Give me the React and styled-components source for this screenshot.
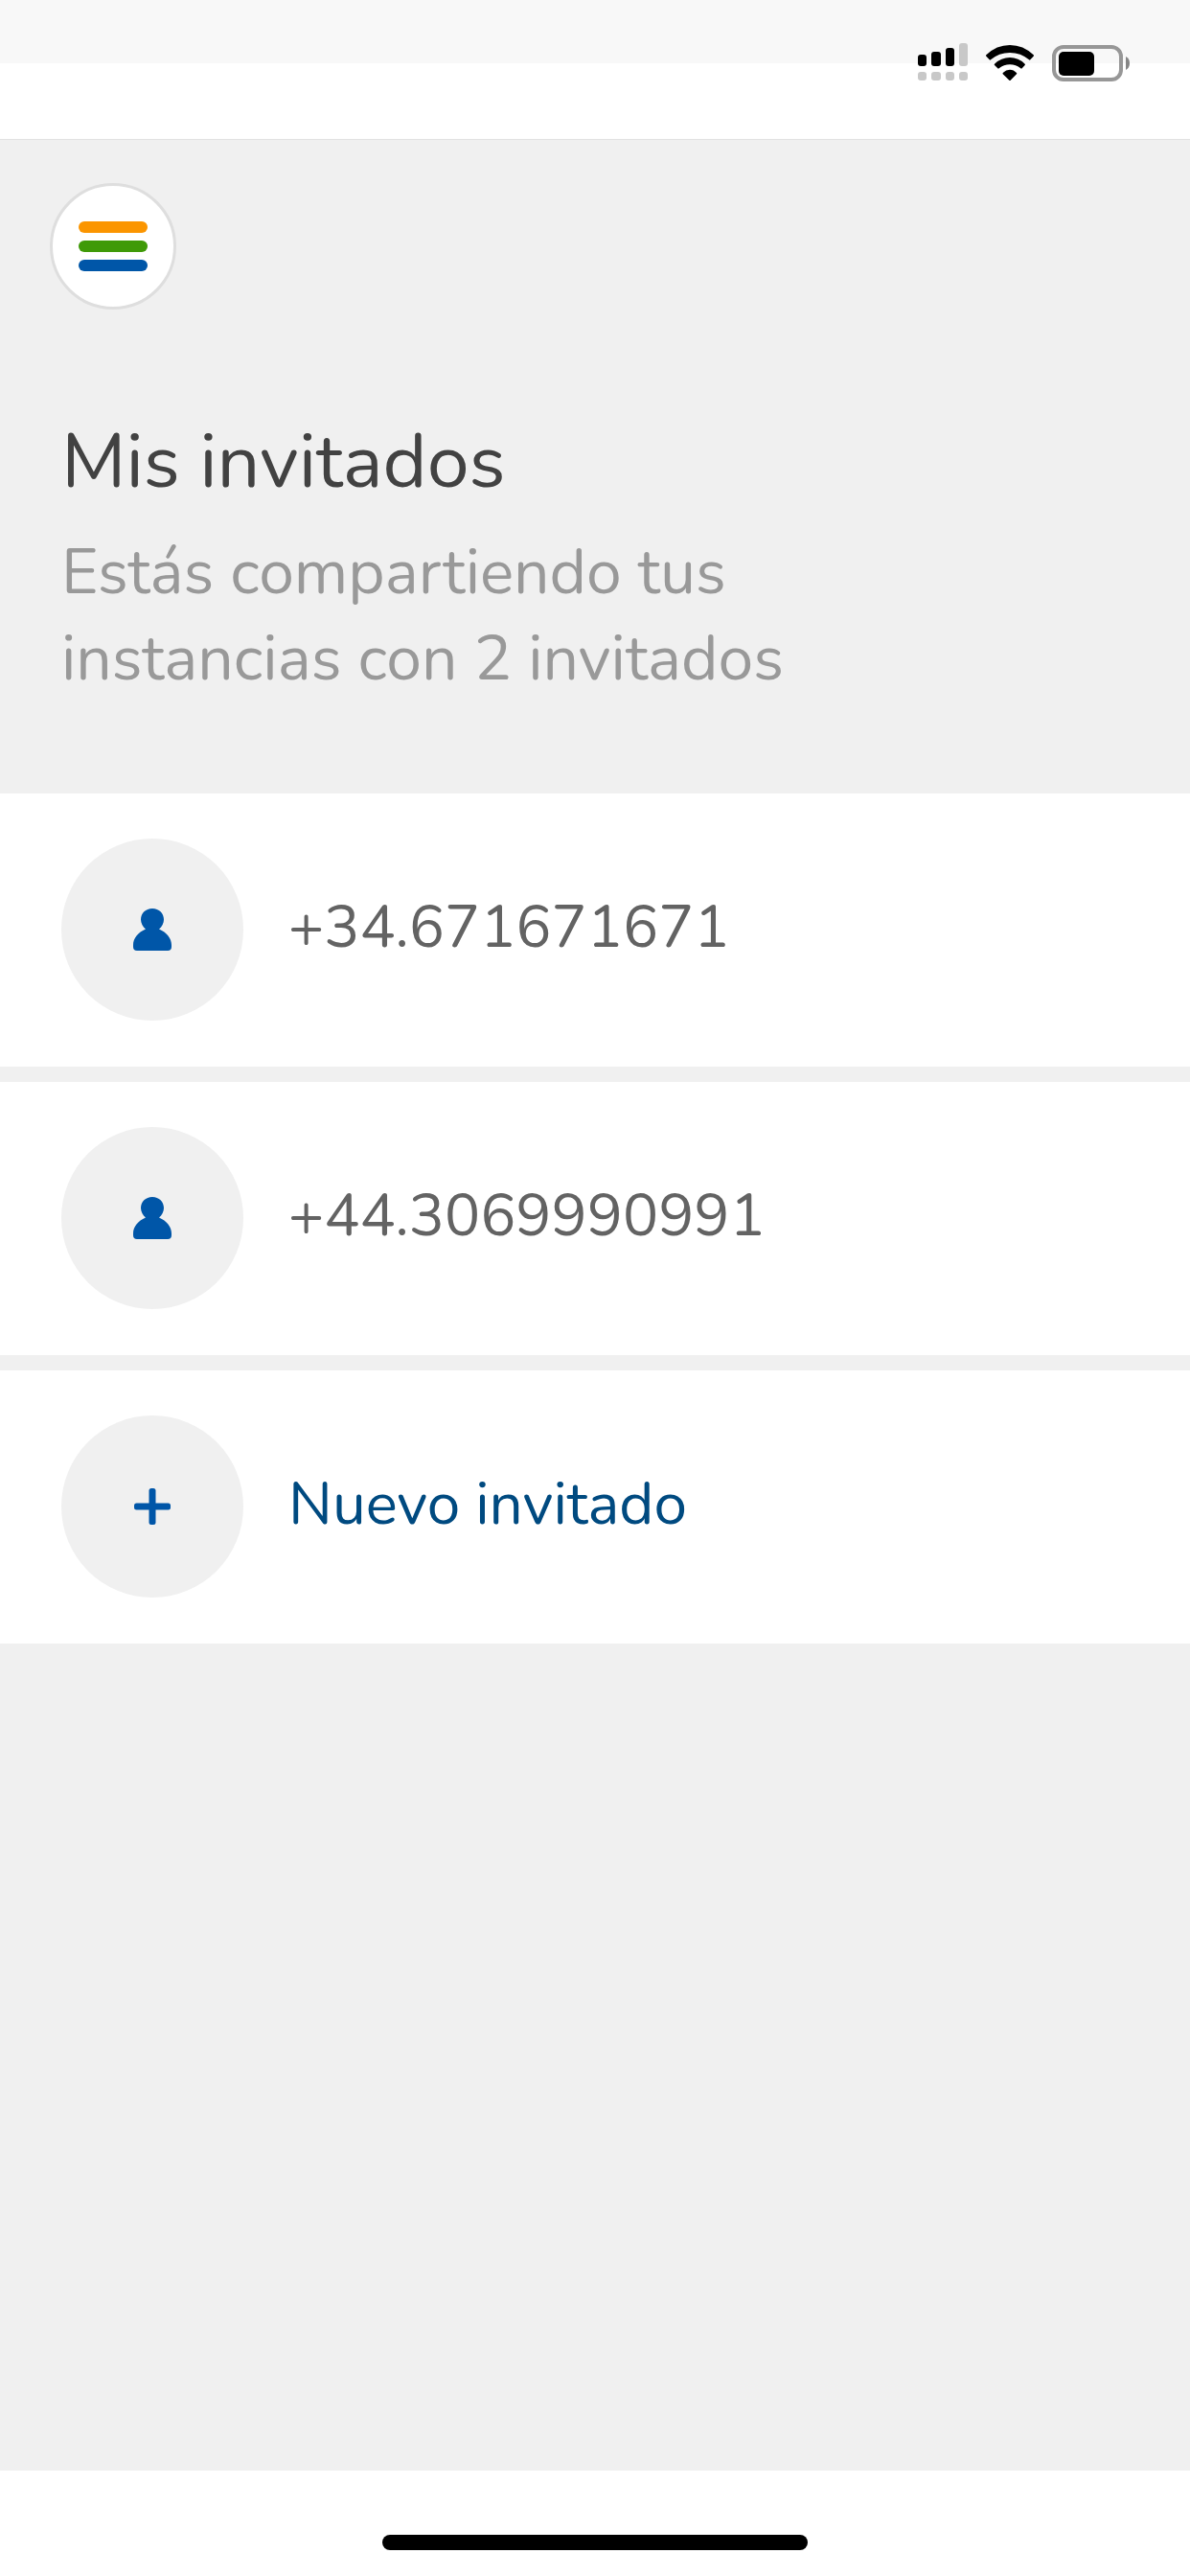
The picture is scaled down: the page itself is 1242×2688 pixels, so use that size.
import React from "react";
import styled, { createGlobalStyle } from "styled-components";

const COLORS = {
  page: "#f0f0f0",
  surface: "#ffffff",
  strip: "#f8f8f8",
  title: "#424242",
  subtitle: "#999999",
  text: "#636363",
  link: "#004a80",
  icon: "#0056a8",
  orange: "#fb9500",
  green: "#3f9a08",
  blue: "#0056a8",
};

const GUESTS = ["+34.671671671", "+44.3069990991"];

const GlobalStyle = createGlobalStyle`
  *, *::before, *::after {
    box-sizing: border-box;
  }
  body {
    margin: 0;
    background: ${COLORS.surface};
    font-family: "Nunito", "Open Sans", "Noto Sans", sans-serif;
  }
`;

export default function App() {
  return (
    <Screen>
      <GlobalStyle />
      <StatusBar>
        <SignalIcon />
        <WifiIcon />
        <BatteryIcon />
      </StatusBar>
      <Content>
        <Header>
          <MenuButton type="button" aria-label="Menú">
            <MenuLine color={COLORS.orange} />
            <MenuLine color={COLORS.green} />
            <MenuLine color={COLORS.blue} />
          </MenuButton>
          <Title>Mis invitados</Title>
          <Subtitle>
            {`Estás compartiendo tus instancias con ${GUESTS.length} invitados`}
          </Subtitle>
        </Header>
        <List>
          {GUESTS.map(phone => (
            <li key={phone}>
              <Row>
                <Avatar>
                  <PersonIcon />
                </Avatar>
                <Label>{phone}</Label>
              </Row>
            </li>
          ))}
          <li>
            <ActionRow as="button" type="button">
              <Avatar>
                <PlusIcon />
              </Avatar>
              <Label>Nuevo invitado</Label>
            </ActionRow>
          </li>
        </List>
      </Content>
      <HomeArea>
        <HomeIndicator />
      </HomeArea>
    </Screen>
  );
}

// ICONS
const SignalIcon = () => (
  <svg width="52" height="40" viewBox="0 0 52 40" aria-hidden="true">
    <rect x="0" y="12" width="9" height="12" rx="3" />
    <rect x="14" y="9" width="10" height="15" rx="3" />
    <rect x="29" y="5" width="9" height="19" rx="3" />
    <g fill="#c8c8c8">
      <rect x="43" y="0" width="9" height="24" rx="3" />
      <rect x="0" y="30" width="9" height="9" rx="3" />
      <rect x="14" y="30" width="10" height="9" rx="3" />
      <rect x="29" y="30" width="9" height="9" rx="3" />
      <rect x="43" y="30" width="9" height="9" rx="3" />
    </g>
  </svg>
);

const WifiIcon = () => (
  <svg width="50" height="38" viewBox="0 3 150 114" aria-hidden="true">
    <path d="M1 34Q-1 36 1 38L11 49Q13 51 15 49Q41 27 75 27Q109 27 135 49Q137 51 139 49L149 38Q151 36 149 34Q117 3 75 3Q33 3 1 34Z" />
    <path d="M27 62Q25 64 27 66L37 76Q39 78 41 76Q56 64 75 64Q94 64 109 76Q111 78 113 76L122 66Q124 64 122 62Q102 42 75 42Q48 42 27 62Z" />
    <path d="M53 90Q52 92 53 94L73 113Q75 115 77 113L96 94Q98 92 96 90Q87 80 75 80Q63 80 53 90Z" />
  </svg>
);

const BatteryIcon = () => (
  <svg width="82" height="38" viewBox="0 0 82 38" aria-hidden="true">
    <rect
      x="2"
      y="2"
      width="70"
      height="34"
      rx="10"
      fill="none"
      stroke="#979797"
      strokeWidth="4"
    />
    <rect x="7" y="7" width="37" height="25" rx="5" />
    <path d="M77 12Q81 14 81 19Q81 24 77 26Z" fill="#858585" />
  </svg>
);

const PersonIcon = () => (
  <svg width="40" height="44" viewBox="0 0 40 44" aria-hidden="true">
    <path
      fill={COLORS.icon}
      d="M20 0C13 0 8 5 8 11.5C8 15 10 19 13 21.5C5 25 0 31 0 38V40Q0 44 4 44H36Q40 44 40 40V38C40 31 35 25 27 21.5C30 19 32 15 32 11.5C32 5 27 0 20 0Z"
    />
  </svg>
);

const PlusIcon = () => (
  <svg width="38" height="38" viewBox="0 0 38 38" aria-hidden="true">
    <g fill={COLORS.icon}>
      <rect x="15.5" y="0" width="7" height="38" rx="2.5" />
      <rect x="0" y="15.5" width="38" height="7" rx="2.5" />
    </g>
  </svg>
);

// LAYOUT
const Screen = styled.div`
  display: flex;
  flex-direction: column;
  min-height: 100vh;
`;

const StatusBar = styled.div`
  display: flex;
  align-items: flex-end;
  justify-content: flex-end;
  gap: 19px;
  padding: 45px 62px 60px;
  background: linear-gradient(
    ${COLORS.strip} 66px,
    ${COLORS.surface} 66px
  );
`;

const Content = styled.main`
  flex: 1;
  border-top: 1px solid #e2e2e2;
  background: ${COLORS.page};
`;

const HomeArea = styled.footer`
  display: flex;
  justify-content: center;
  padding: 67px 0 27px;
`;

const HomeIndicator = styled.div`
  width: 444px;
  height: 16px;
  border-radius: 8px;
  background: #000000;
`;

// HEADER
const Header = styled.header`
  padding: 45px 64px 96px;
`;

const MenuButton = styled.button`
  display: flex;
  flex-direction: column;
  align-items: center;
  justify-content: center;
  gap: 8px;
  width: 132px;
  height: 132px;
  margin: 0 0 0 -12px;
  padding: 0;
  border: 3px solid #dedede;
  border-radius: 50%;
  background: ${COLORS.surface};
  cursor: pointer;
`;

const MenuLine = styled.span`
  width: 72px;
  height: 12px;
  border-radius: 6px;
  background: ${props => props.color};
`;

const Title = styled.h1`
  margin: 105px 0 0;
  color: ${COLORS.title};
  font-size: 79px;
  font-weight: 400;
  line-height: 108px;
`;

const Subtitle = styled.p`
  max-width: 840px;
  margin: 16px 0 0;
  color: ${COLORS.subtitle};
  font-size: 66px;
  font-weight: 400;
  line-height: 90px;
`;

// LIST
const List = styled.ul`
  display: flex;
  flex-direction: column;
  gap: 16px;
  margin: 0;
  padding: 0;
  list-style: none;
`;

const Row = styled.div`
  display: flex;
  align-items: center;
  gap: 47px;
  width: 100%;
  padding: 47px 64px 48px;
  border: 0;
  background: ${COLORS.surface};
  color: ${COLORS.text};
  font-family: inherit;
  font-size: 62px;
  line-height: 84px;
  text-align: left;
`;

const ActionRow = styled(Row)`
  color: ${COLORS.link};
  cursor: pointer;
`;

const Label = styled.span`
  padding-bottom: 4px;
`;

const Avatar = styled.span`
  display: flex;
  flex-shrink: 0;
  align-items: center;
  justify-content: center;
  width: 190px;
  height: 190px;
  border-radius: 50%;
  background: ${COLORS.page};
`;
